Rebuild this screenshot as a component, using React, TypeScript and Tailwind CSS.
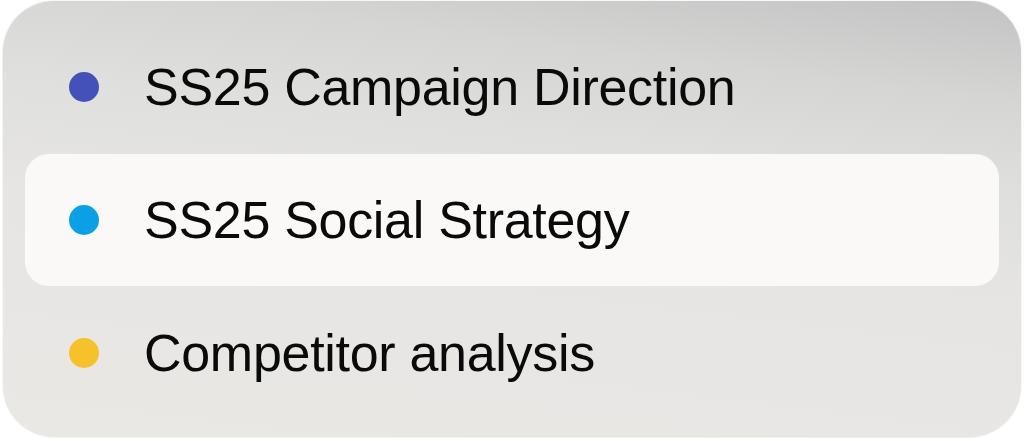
const items = [
  { label: "SS25 Campaign Direction", dot: "bg-[#4451b8]", active: false },
  { label: "SS25 Social Strategy", dot: "bg-[#0b9fe6]", active: true },
  { label: "Competitor analysis", dot: "bg-[#f7c12c]", active: false },
];

export default function App() {
  return (
    <div className="h-[441px] w-[1024px] bg-white pl-[2px] pr-[2px]">
      <div className="flex h-[438px] w-[1020px] flex-col rounded-[52px] border border-white/70 bg-[linear-gradient(187deg,#c3c3c3_0%,#d5d5d4_18%,#dfdfdd_34%,#e6e5e3_55%,#e9e8e5_100%)] px-[22px] pt-[20px] pb-[18px] font-['Liberation_Sans',Arial,sans-serif] text-[#0a0a0a]">
        {items.map(item => (
          <div
            key={item.label}
            className={`flex h-[133px] items-center gap-[45px] rounded-[24px] pl-[44px] ${item.active ? "bg-[#faf9f7]" : ""}`}
          >
            <span className={`h-[30px] w-[30px] shrink-0 rounded-full ${item.dot}`} />
            <span className="text-[52px] leading-none tracking-[-0.3px]">{item.label}</span>
          </div>
        ))}
      </div>
    </div>
  );
}
